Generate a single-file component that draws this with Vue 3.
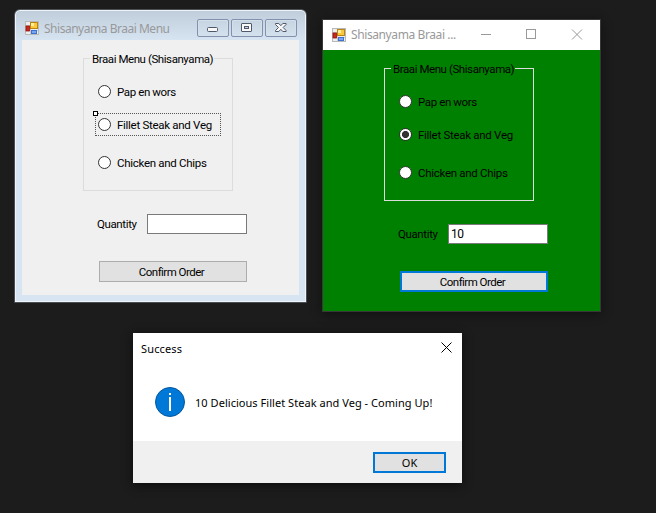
<script setup>
const options = [
  { label: 'Pap en wors', cls: 'pap' },
  { label: 'Fillet Steak and Veg', cls: 'fillet' },
  { label: 'Chicken and Chips', cls: 'chicken' }
]
const forms = [
  { id: 'designer', title: 'Shisanyama Braai Menu', quantity: '', selected: -1 },
  { id: 'running', title: 'Shisanyama Braai ...', quantity: '10', selected: 1 }
]
</script>

<template>
  <main class="desktop">
    <section v-for="form in forms" :key="form.id" class="window" :class="form.id">
      <header class="titlebar">
        <svg class="app-icon" width="14" height="14" viewBox="0 0 14 14">
          <rect x=".5" y=".5" width="13" height="13" fill="#eee" stroke="#b9b9b9" />
          <path d="M5.5 1v12M1 4.5h5M1 9.5h12" stroke="#c9c9c9" fill="none" />
          <rect x="1" y="5" width="3.5" height="5" fill="#c42b1c" stroke="#981010" stroke-width=".8" />
          <rect x="5.5" y="1.5" width="7" height="6" fill="#fbc93a" stroke="#b98512" />
          <rect x="6" y="2" width="3" height="3" fill="#fff0a0" />
          <rect x="6.5" y="9.5" width="5" height="3" fill="#75a7f4" stroke="#3e72cc" />
        </svg>
        <h1 class="caption">{{ form.title }}</h1>
        <div v-if="form.id === 'designer'" class="classic-controls">
          <span class="classic-button">
            <svg width="30" height="16" viewBox="0 0 30 16"><rect x="9.5" y="7.5" width="10" height="4" rx="1" fill="#f8f8f8" stroke="#50586a" /></svg>
          </span>
          <span class="classic-button">
            <svg width="30" height="16" viewBox="0 0 30 16">
              <rect x="9.5" y="3.5" width="10" height="8" rx=".5" fill="#f8f8f8" stroke="#50586a" />
              <rect x="12.5" y="6.5" width="4" height="2" fill="#c6d2e0" stroke="#50586a" />
            </svg>
          </span>
          <span class="classic-button">
            <svg width="30" height="16" viewBox="0 0 30 16">
              <path d="M9.5 3.5h3.3l2 2.2 2-2.2h3.3v1l-3 3 3 3v1h-3.3l-2-2.2-2 2.2H9.5v-1l3-3-3-3z" fill="#f8f8f8" stroke="#50586a" />
            </svg>
          </span>
        </div>
        <div v-else class="flat-controls">
          <svg width="102" height="11" viewBox="0 0 102 11" fill="none" stroke="#999">
            <path d="M0 5.5h10" />
            <rect x="45.5" y=".5" width="9" height="9" />
            <path d="M91 .5l10 10M101 .5l-10 10" />
          </svg>
        </div>
      </header>

      <div class="client">
        <div class="group">
          <div class="legend"><span>Braai Menu (Shisanyama)</span></div>
          <div
            v-for="(option, i) in options"
            :key="option.label"
            class="option"
            :class="[option.cls, { outlined: form.id === 'designer' && i === 1 }]"
          >
            <i v-if="form.id === 'designer' && i === 1" class="handle"></i>
            <span class="radio" :class="{ checked: form.selected === i }"></span>
            <span class="option-text">{{ option.label }}</span>
          </div>
        </div>
        <div class="quantity">
          <span class="quantity-label">Quantity</span>
          <div class="field">{{ form.quantity }}</div>
        </div>
        <div class="confirm"><span>Confirm Order</span></div>
      </div>
    </section>

    <section class="window dialog">
      <header class="dialog-title">
        <span class="dialog-caption">Success</span>
        <svg class="dialog-close" width="11" height="11" viewBox="0 0 11 11" fill="none" stroke="#000"><path d="M.5 .5l10 10M10.5 .5l-10 10" /></svg>
      </header>
      <div class="message">
        <svg width="30" height="30" viewBox="0 0 30 30">
          <circle cx="15" cy="15" r="14.5" fill="#0078d7" stroke="#07579a" />
          <rect x="14" y="6" width="2" height="2" fill="#fff" />
          <rect x="14" y="10" width="2" height="14" fill="#fff" />
        </svg>
        <span class="message-text">10 Delicious Fillet Steak and Veg - Coming Up!</span>
      </div>
      <footer class="actions"><div class="ok">OK</div></footer>
    </section>
  </main>
</template>

<style>
body {
  margin: 0;
  background: #1c1c1c;
}
</style>

<style scoped>
.desktop {
  position: relative;
  width: 656px;
  height: 513px;
  overflow: hidden;
  background: #1c1c1c;
  font-family: Roboto, 'Liberation Sans', sans-serif;
  font-size: 11.5px;
  color: #000;
  white-space: nowrap;
}
.desktop * {
  box-sizing: border-box;
}
.window {
  position: absolute;
}
.designer {
  left: 14px;
  top: 9px;
  width: 293px;
  height: 294px;
  padding: 0 7px 7px;
  border: 1px solid #4b4e52;
  border-radius: 6px 6px 0 0;
  background: linear-gradient(#bfcddb, #d7e4f2 31px);
  box-shadow: inset 0 0 0 1px #eef4fa;
}
.running {
  left: 322px;
  top: 19px;
  width: 279px;
  height: 293px;
  border: 1px solid #383838;
  background: #fff;
  box-shadow: 0 2px 9px #111;
}
.dialog {
  left: 133px;
  top: 333px;
  width: 329px;
  height: 150px;
  background: #fff;
  box-shadow: 0 2px 9px #0c0c0c;
  font-family: 'Noto Sans', sans-serif;
}
.titlebar {
  display: flex;
  align-items: center;
  height: 30px;
}
.designer .titlebar {
  padding: 6px 2px 0 3px;
}
.running .titlebar {
  padding: 0 17px 0 9px;
}
.caption {
  margin: 0 0 0 5px;
  font: 12px/16px 'Noto Sans', sans-serif;
  letter-spacing: -0.48px;
  color: #999;
}
.designer .caption {
  margin-top: 2px;
}
.running .caption {
  letter-spacing: -0.4px;
}
.classic-controls {
  display: flex;
  gap: 2px;
  margin-left: auto;
}
.classic-button {
  width: 32px;
  height: 18px;
  border: 1px solid #8291ad;
  border-radius: 2px;
  box-shadow: inset 0 0 0 1px #d5dfea;
}
.classic-button svg {
  display: block;
}
.flat-controls {
  margin: -2px 0 0 auto;
}
.flat-controls svg {
  display: block;
}
.client {
  height: 255px;
  padding: 18px 0 0 61px;
  background: #f0f0f0;
}
.running .client {
  height: 261px;
  background: #008000;
}
.group {
  width: 150px;
  height: 133px;
  border: 1px solid #dcdcdc;
}
.legend {
  height: 14px;
  margin-top: -7px;
  padding-left: 6px;
  line-height: 14px;
  letter-spacing: -0.43px;
}
.legend span {
  display: inline-block;
  width: 124px;
  padding-left: 2px;
  background: #f0f0f0;
}
.running .legend span {
  background: #008000;
}
.option {
  position: relative;
  display: flex;
  align-items: center;
  gap: 6px;
  width: 126px;
  height: 23px;
  margin-left: 11px;
  padding-left: 3px;
}
.option-text {
  letter-spacing: -0.29px;
}
.pap {
  margin-top: 14px;
}
.pap .option-text {
  letter-spacing: -0.39px;
}
.fillet {
  margin-top: 10px;
}
.chicken {
  margin-top: 15px;
}
.outlined {
  outline: 1px dotted #555;
  outline-offset: -1px;
}
.handle {
  position: absolute;
  left: -2px;
  top: -2px;
  width: 5px;
  height: 5px;
  border: 1px solid #000;
  background: #fff;
}
.radio {
  flex: none;
  width: 13px;
  height: 13px;
  border: 1px solid #333;
  border-radius: 50%;
  background: #fff;
}
.checked {
  background: radial-gradient(circle, #333 3.2px, #fff 3.9px);
}
.quantity {
  display: flex;
  align-items: center;
  height: 20px;
  margin: 23px 0 0 14px;
}
.quantity-label {
  width: 50px;
  letter-spacing: -0.38px;
}
.field {
  width: 100px;
  height: 20px;
  padding-left: 2px;
  border: 1px solid #7a7a7a;
  background: #fff;
  font-size: 12px;
  line-height: 18px;
  letter-spacing: -0.4px;
}
.confirm {
  display: flex;
  align-items: center;
  justify-content: center;
  width: 148px;
  height: 21px;
  margin: 27px 0 0 16px;
  padding-right: 3px;
  border: 1px solid #adadad;
  background: #e1e1e1;
  letter-spacing: -0.53px;
}
.running .confirm {
  border: 2px solid #0078d7;
}
.dialog-title {
  display: flex;
  align-items: center;
  justify-content: space-between;
  height: 28px;
  padding: 2px 10px 0 8px;
}
.dialog-close {
  margin-top: -2px;
}
.message {
  display: flex;
  align-items: center;
  gap: 10px;
  height: 80px;
  padding: 2px 0 0 22px;
}
.actions {
  display: flex;
  justify-content: flex-end;
  height: 42px;
  padding: 11px 16px 0 0;
  background: #f0f0f0;
}
.ok {
  width: 73px;
  height: 21px;
  border: 2px solid #0078d7;
  background: #e1e1e1;
  line-height: 18px;
  text-align: center;
  font-size: 11px;
}
.message-text,
.dialog-caption {
  font-size: 11px;
  letter-spacing: 0.04px;
}
.dialog-caption {
  letter-spacing: 0.15px;
}
</style>
